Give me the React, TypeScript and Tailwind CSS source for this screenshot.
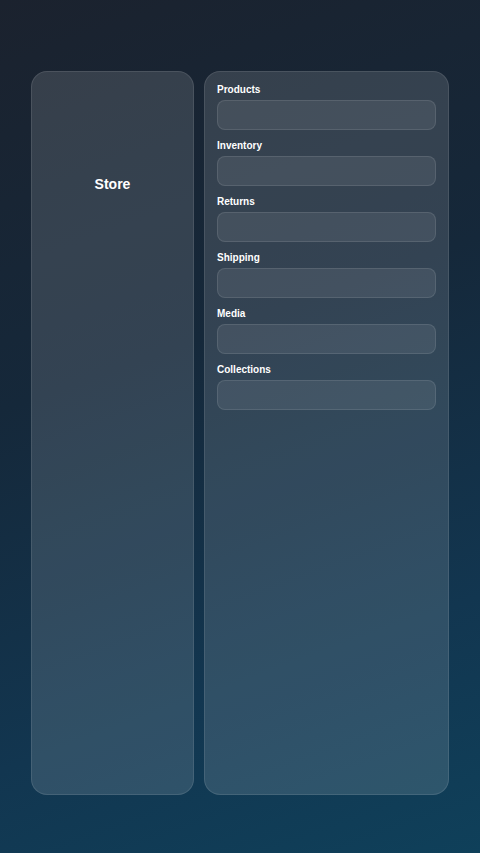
const sections = ["Products", "Inventory", "Returns", "Shipping", "Media", "Collections"];

export default function App() {
  return (
    <div
      className="min-h-[853px] w-full bg-[linear-gradient(160deg,#1b222e_0%,#15283a_40%,#123650_75%,#0f405a_100%)] pt-[71px] pb-[58px] pl-[31px] pr-[31px] flex gap-[10px]"
      style={{ fontFamily: '"Liberation Sans", Arial, sans-serif' }}
    >
      {/* Sidebar */}
      <div className="w-[163px] shrink-0 h-[724px] rounded-[16px] border border-white/10 bg-white/[0.13] pt-[100px] text-center">
        <span className="text-[14px] leading-[18px] font-bold text-white">Store</span>
      </div>

      {/* Form panel */}
      <div className="flex-1 h-[724px] rounded-[16px] border border-white/10 bg-white/[0.13] px-[12px] pt-[12px]">
        {sections.map((label) => (
          <div key={label} className="mb-[10px]">
            <p className="text-[10px] leading-[12px] font-bold text-white mb-[4px]">{label}</p>
            <div className="h-[30px] rounded-[8px] border border-white/10 bg-white/[0.08]" />
          </div>
        ))}
      </div>
    </div>
  );
}
